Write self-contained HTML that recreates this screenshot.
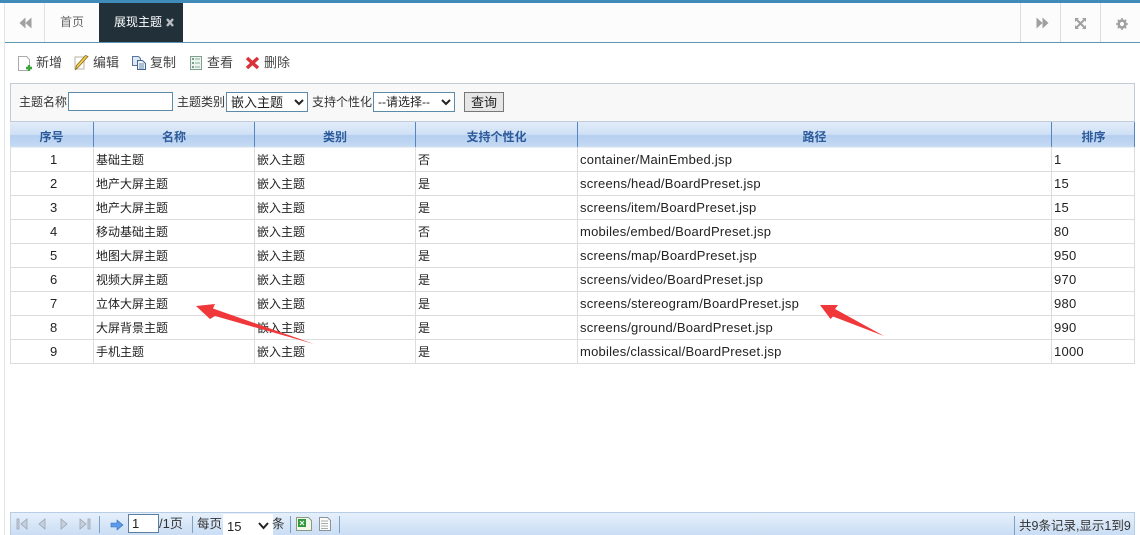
<!DOCTYPE html>
<html lang="zh"><head><meta charset="utf-8"><title>展现主题</title>
<style>
*{box-sizing:border-box}
html,body{margin:0;padding:0;width:1140px;height:535px;overflow:hidden;background:#fff}
body{position:relative;font:12px "Liberation Sans","Noto Sans CJK SC",sans-serif;color:#333}
.a{position:absolute;white-space:nowrap}
.v{position:absolute;width:1px}
.h{position:absolute;height:1px}
.tb{font-size:13px;top:55px;line-height:16px;color:#444}
.c{position:absolute;white-space:nowrap;line-height:24px;height:24px;font-size:12px;color:#222}
.l{font-size:13px;letter-spacing:.24px}
.th{position:absolute;top:122px;height:25px;line-height:30px;text-align:center;color:#2c5a9a;font-weight:700;font-size:12px}
.s{position:absolute;font:12px "Liberation Sans","Noto Sans CJK SC",sans-serif;background:#fff;border:1px solid #5d8aa8;border-radius:0;padding:0;color:#222;height:20px}
</style></head><body>
<div class="a" style="left:0;top:0;width:1140px;height:3px;background:#3f8cba"></div>
<div class="a" style="left:5px;top:3px;width:1135px;height:39px;background:#fcfcfc"></div>
<div class="h" style="left:4px;top:42px;width:1136px;background:#5f97b3"></div>
<div class="v" style="left:4px;top:3px;height:532px;background:#dfe6ea"></div>
<div class="v" style="left:44px;top:3px;height:39px;background:#e2e2e2"></div>
<div class="v" style="left:1020px;top:3px;height:39px;background:#dddddd"></div>
<div class="v" style="left:1060px;top:3px;height:39px;background:#dddddd"></div>
<div class="v" style="left:1100px;top:3px;height:39px;background:#dddddd"></div>
<svg class="a" style="left:19px;top:17px" width="13" height="12" viewBox="0 0 13 12"><path d="M6.500 0.500v11L0.500 6zM12.500 0.500v11L6.500 6z" fill="#a0a0a0"/></svg>
<div class="a" style="left:60px;top:14px;line-height:17px;color:#666">首页</div>
<div class="a" style="left:99px;top:3px;width:84px;height:39px;background:#22303a"></div>
<div class="a" style="left:114px;top:14px;line-height:17px;color:#fff">展现主题</div>
<svg class="a" style="left:166px;top:18px" width="8" height="9" viewBox="0 0 8 9"><path d="M1 1l6 7M7 1l-6 7" stroke="#b9bdc0" stroke-width="2.400"/></svg>
<svg class="a" style="left:1036px;top:17px" width="13" height="12" viewBox="0 0 13 12"><path d="M0.500 0.500v11l6-5.500zM6.500 0.500v11l6-5.500z" fill="#a0a0a0"/></svg>
<svg class="a" style="left:1075px;top:18px" width="11" height="11" viewBox="0 0 11 11"><path d="M2 2l7 7M9 2L2 9" stroke="#a0a0a0" stroke-width="2"/><path d="M0 0h4L0 4zM11 0v4L7 0zM0 11V7l4 4zM11 11H7l4-4z" fill="#a0a0a0"/></svg>
<svg class="a" style="left:1116px;top:18px" width="12" height="12" viewBox="0 0 12 12"><circle cx="6" cy="6" r="3.400" fill="none" stroke="#a0a0a0" stroke-width="2.600"/><path d="M6 0v12M0 6h12M1.800 1.800l8.400 8.400M10.200 1.800l-8.400 8.400" stroke="#a0a0a0" stroke-width="1.500" stroke-dasharray="2 8"/></svg>

<svg class="a" style="left:17px;top:55px" width="16" height="17" viewBox="0 0 16 17"><path d="M1.500 1.500h8l3 3v11h-11z" fill="#fff" stroke="#aaa"/><path d="M12 10v6M9 13h6" stroke="#3aa53a" stroke-width="2.400"/></svg>
<div class="a tb" style="left:36px">新增</div>
<svg class="a" style="left:73px;top:55px" width="16" height="16" viewBox="0 0 16 16"><path d="M2 2h9v12H2z" fill="#fff" stroke="#b5b5a0"/><path d="M15 1.500L5.500 12 2.500 14.500 3.500 10.500 12.500 0.500z" fill="#f4cf4a" stroke="#8a6a1c" stroke-width=".8"/></svg>
<div class="a tb" style="left:93px">编辑</div>
<svg class="a" style="left:131px;top:55px" width="16" height="16" viewBox="0 0 16 16"><path d="M1.500 1.500h6l2 2v7h-8z" fill="#dfe8f4" stroke="#55779c"/><path d="M6.500 5.500h5l3 3v6h-8z" fill="#eef3fa" stroke="#3f6590"/><path d="M8 9h5M8 11h5M8 13h5" stroke="#6a8cb0"/></svg>
<div class="a tb" style="left:150px">复制</div>
<svg class="a" style="left:189px;top:55px" width="14" height="16" viewBox="0 0 14 16"><path d="M1.500 1.500h11v13h-11z" fill="#eef5ee" stroke="#80a090"/><path d="M3 4h2M3 8h2M3 12h2" stroke="#4d8a5e" stroke-width="1.500"/><path d="M6 4h5M6 8h5M6 12h5" stroke="#8aa"/></svg>
<div class="a tb" style="left:207px">查看</div>
<svg class="a" style="left:245px;top:56px" width="15" height="14" viewBox="0 0 15 14"><path d="M2 2l11 10M13 2L2 12" stroke="#d9333a" stroke-width="3.400"/></svg>
<div class="a tb" style="left:264px">删除</div>

<div class="a" style="left:10px;top:83px;width:1125px;height:39px;background:#f8f8f9;border:1px solid #c0ccd8"></div>
<div class="a" style="left:19px;top:94px;line-height:16px">主题名称</div>
<div class="s" style="left:68px;top:92px;width:105px;height:19px"></div>
<div class="a" style="left:177px;top:94px;line-height:16px">主题类别</div>
<select class="s" style="left:226px;top:92px;width:82px;font-size:13px"><option>嵌入主题</option></select>
<div class="a" style="left:312px;top:94px;line-height:16px">支持个性化</div>
<select class="s" style="left:373px;top:92px;width:82px;font-size:12px"><option>--请选择--</option></select>
<div class="a" style="left:464px;top:92px;width:40px;height:20px;background:#e6e6e6;border:1px solid #777;text-align:center;line-height:19px;font-size:13px;color:#222">查询</div>

<div class="a" style="left:10px;top:122px;width:1125px;height:26px;background:linear-gradient(#e2ecf9 0,#cfe0f5 48%,#b5cfef 52%,#c4d9f3 94%,#e6eef8 96%);"></div>
<div class="th" style="left:10px;width:83px">序号</div>
<div class="th" style="left:94px;width:160px">名称</div>
<div class="th" style="left:255px;width:160px">类别</div>
<div class="th" style="left:416px;width:161px">支持个性化</div>
<div class="th" style="left:578px;width:473px">路径</div>
<div class="th" style="left:1052px;width:83px">排序</div>
<div class="v" style="left:93px;top:122px;height:25px;background:#5586c0"></div>
<div class="v" style="left:254px;top:122px;height:25px;background:#5586c0"></div>
<div class="v" style="left:415px;top:122px;height:25px;background:#5586c0"></div>
<div class="v" style="left:577px;top:122px;height:25px;background:#5586c0"></div>
<div class="v" style="left:1051px;top:122px;height:25px;background:#5586c0"></div>
<div class="v" style="left:1134px;top:122px;height:25px;background:#5586c0"></div>

<div class="v" style="left:10px;top:147px;height:217px;background:#dcdcdc"></div>
<div class="v" style="left:93px;top:147px;height:217px;background:#dcdcdc"></div>
<div class="v" style="left:254px;top:147px;height:217px;background:#dcdcdc"></div>
<div class="v" style="left:415px;top:147px;height:217px;background:#dcdcdc"></div>
<div class="v" style="left:577px;top:147px;height:217px;background:#dcdcdc"></div>
<div class="v" style="left:1051px;top:147px;height:217px;background:#dcdcdc"></div>
<div class="v" style="left:1134px;top:147px;height:217px;background:#dcdcdc"></div>
<div class="h" style="left:10px;top:171px;width:1125px;background:#dcdcdc"></div>
<div class="h" style="left:10px;top:195px;width:1125px;background:#dcdcdc"></div>
<div class="h" style="left:10px;top:219px;width:1125px;background:#dcdcdc"></div>
<div class="h" style="left:10px;top:243px;width:1125px;background:#dcdcdc"></div>
<div class="h" style="left:10px;top:267px;width:1125px;background:#dcdcdc"></div>
<div class="h" style="left:10px;top:291px;width:1125px;background:#dcdcdc"></div>
<div class="h" style="left:10px;top:315px;width:1125px;background:#dcdcdc"></div>
<div class="h" style="left:10px;top:339px;width:1125px;background:#dcdcdc"></div>
<div class="h" style="left:10px;top:363px;width:1125px;background:#dcdcdc"></div>

<div class="c l" style="left:50px;top:148px">1</div><div class="c" style="left:96px;top:148px">基础主题</div><div class="c" style="left:257px;top:148px">嵌入主题</div><div class="c" style="left:418px;top:148px">否</div><div class="c l" style="left:580px;top:148px">container/MainEmbed.jsp</div><div class="c l" style="left:1054px;top:148px">1</div>
<div class="c l" style="left:50px;top:172px">2</div><div class="c" style="left:96px;top:172px">地产大屏主题</div><div class="c" style="left:257px;top:172px">嵌入主题</div><div class="c" style="left:418px;top:172px">是</div><div class="c l" style="left:580px;top:172px">screens/head/BoardPreset.jsp</div><div class="c l" style="left:1054px;top:172px">15</div>
<div class="c l" style="left:50px;top:196px">3</div><div class="c" style="left:96px;top:196px">地产大屏主题</div><div class="c" style="left:257px;top:196px">嵌入主题</div><div class="c" style="left:418px;top:196px">是</div><div class="c l" style="left:580px;top:196px">screens/item/BoardPreset.jsp</div><div class="c l" style="left:1054px;top:196px">15</div>
<div class="c l" style="left:50px;top:220px">4</div><div class="c" style="left:96px;top:220px">移动基础主题</div><div class="c" style="left:257px;top:220px">嵌入主题</div><div class="c" style="left:418px;top:220px">否</div><div class="c l" style="left:580px;top:220px">mobiles/embed/BoardPreset.jsp</div><div class="c l" style="left:1054px;top:220px">80</div>
<div class="c l" style="left:50px;top:244px">5</div><div class="c" style="left:96px;top:244px">地图大屏主题</div><div class="c" style="left:257px;top:244px">嵌入主题</div><div class="c" style="left:418px;top:244px">是</div><div class="c l" style="left:580px;top:244px">screens/map/BoardPreset.jsp</div><div class="c l" style="left:1054px;top:244px">950</div>
<div class="c l" style="left:50px;top:268px">6</div><div class="c" style="left:96px;top:268px">视频大屏主题</div><div class="c" style="left:257px;top:268px">嵌入主题</div><div class="c" style="left:418px;top:268px">是</div><div class="c l" style="left:580px;top:268px">screens/video/BoardPreset.jsp</div><div class="c l" style="left:1054px;top:268px">970</div>
<div class="c l" style="left:50px;top:292px">7</div><div class="c" style="left:96px;top:292px">立体大屏主题</div><div class="c" style="left:257px;top:292px">嵌入主题</div><div class="c" style="left:418px;top:292px">是</div><div class="c l" style="left:580px;top:292px">screens/stereogram/BoardPreset.jsp</div><div class="c l" style="left:1054px;top:292px">980</div>
<div class="c l" style="left:50px;top:316px">8</div><div class="c" style="left:96px;top:316px">大屏背景主题</div><div class="c" style="left:257px;top:316px">嵌入主题</div><div class="c" style="left:418px;top:316px">是</div><div class="c l" style="left:580px;top:316px">screens/ground/BoardPreset.jsp</div><div class="c l" style="left:1054px;top:316px">990</div>
<div class="c l" style="left:50px;top:340px">9</div><div class="c" style="left:96px;top:340px">手机主题</div><div class="c" style="left:257px;top:340px">嵌入主题</div><div class="c" style="left:418px;top:340px">是</div><div class="c l" style="left:580px;top:340px">mobiles/classical/BoardPreset.jsp</div><div class="c l" style="left:1054px;top:340px">1000</div>

<svg class="a" style="left:0;top:0" width="1140" height="535"><path d="M196 306L215 304L213 308.500L314 344L215 316L210 319Z" fill="#f0373a"/><path d="M820 305L838 305L835 309L884 336L833 316.500L830.500 319Z" fill="#f0373a"/></svg>

<div class="a" style="left:10px;top:512px;width:1125px;height:23px;background:linear-gradient(#e6f0fb,#c9ddf4);border:1px solid #b7cde4;border-bottom:0"></div>
<svg class="a" style="left:16px;top:517px" width="85" height="14" viewBox="0 0 85 14"><g fill="#c6cfdc" stroke="#9aa5b3" stroke-width=".8"><path d="M1 2h2v10H1zM11 2v10L5 7z"/><path d="M29 2v10l-6-5z"/><path d="M45 2v10l6-5z"/><path d="M64 2v10l6-5zM72 2h2v10h-2z"/></g></svg>
<div class="v" style="left:99px;top:516px;height:17px;background:#7f9fc0"></div>
<svg class="a" style="left:110px;top:519px" width="14" height="12" viewBox="0 0 14 12"><path d="M1 4h6V1l6 5-6 5V8H1z" fill="#5d9be8" stroke="#2f6fc0" stroke-width=".6"/></svg>
<div class="a" style="left:128px;top:514px;width:31px;height:19px;background:#fff;border:1px solid #5d7f9f;padding-left:3px;font-size:13px;line-height:17px;color:#222">1</div>
<div class="a" style="left:159px;top:516px;line-height:16px;font-size:13px">/1页</div>
<div class="v" style="left:192px;top:516px;height:17px;background:#7f9fc0"></div>
<div class="a" style="left:197px;top:516px;line-height:16px;font-size:12.500px">每页</div>
<div class="a" style="left:223px;top:514px;width:50px;height:21px;background:#fff"></div>
<div class="a" style="left:227px;top:519px;font-size:13px;line-height:16px;color:#222">15</div>
<svg class="a" style="left:258px;top:522px" width="11" height="8" viewBox="0 0 11 8"><path d="M1 1l4.500 5L10 1" fill="none" stroke="#222" stroke-width="2"/></svg>
<div class="a" style="left:272px;top:516px;line-height:16px;font-size:12.500px">条</div>
<div class="v" style="left:290px;top:516px;height:17px;background:#7f9fc0"></div>
<svg class="a" style="left:295px;top:516px" width="18" height="16" viewBox="0 0 18 16"><path d="M1.500 1.500h12l3 3v10h-15z" fill="#f3f6ea" stroke="#8a9a80"/><path d="M3 3h8v8H3z" fill="#2f9a3c"/><path d="M5 5l4 4M9 5l-4 4" stroke="#fff"/></svg>
<svg class="a" style="left:318px;top:516px" width="14" height="16" viewBox="0 0 14 16"><path d="M1.500 1.500h8l3 3v10h-11z" fill="#fbfbf8" stroke="#8b929c"/><path d="M3 5h7M3 7.500h7M3 10h7M3 12.500h7" stroke="#a7adb5"/></svg>
<div class="v" style="left:339px;top:516px;height:17px;background:#7f9fc0"></div>
<div class="v" style="left:1014px;top:516px;height:19px;background:#7f9fc0"></div>
<div class="a" style="left:1019px;top:518px;line-height:16px;font-size:12.500px;color:#333">共9条记录,显示1到9</div>
</body></html>
